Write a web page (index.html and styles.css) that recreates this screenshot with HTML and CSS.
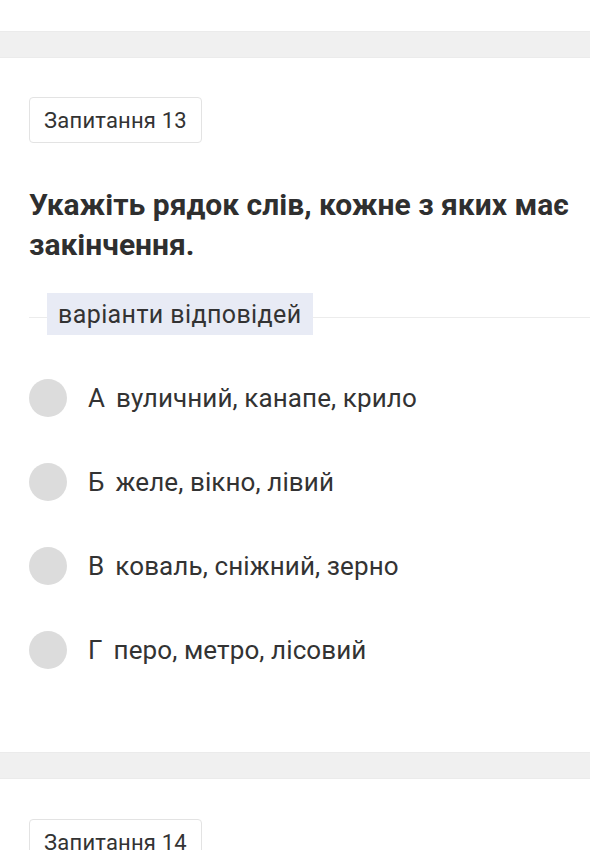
FILE: index.html
```html
<!DOCTYPE html>
<html lang="uk">
<head>
<meta charset="utf-8">
<link rel="stylesheet" href="styles.css">
</head>
<body>
<div class="prev-end"></div>
<div class="band"></div>
<section class="card">
  <div class="badge">Запитання 13</div>
  <h2 class="title">Укажіть рядок слів, кожне з яких має закінчення.</h2>
  <div class="divider"><span class="divider-label">варіанти відповідей</span></div>
  <ul class="options">
    <li class="option"><span class="radio"></span><span class="opt-text"><span class="letter">А</span>вуличний, канапе, крило</span></li>
    <li class="option"><span class="radio"></span><span class="opt-text"><span class="letter">Б</span>желе, вікно, лівий</span></li>
    <li class="option"><span class="radio"></span><span class="opt-text"><span class="letter">В</span>коваль, сніжний, зерно</span></li>
    <li class="option"><span class="radio"></span><span class="opt-text"><span class="letter">Г</span>перо, метро, лісовий</span></li>
  </ul>
</section>
<div class="band"></div>
<section class="card next">
  <div class="badge">Запитання 14</div>
</section>
</body>
</html>
```

FILE: styles.css
```css
html, body {
  margin: 0;
  padding: 0;
  background: #fff;
  font-family: Roboto, "Noto Sans", sans-serif;
  color: #333;
}
.prev-end {
  height: 31px;
}
.band {
  height: 27px;
  background: #f0f0f0;
  border-top: 1px solid #ebebeb;
  border-bottom: 1px solid #ebebeb;
  box-sizing: border-box;
}
.card {
  padding: 39px 0 83px 29px;
  display: flex;
  flex-direction: column;
  align-items: flex-start;
}
.card.next {
  padding-top: 40px;
  padding-bottom: 0;
}
.badge {
  box-sizing: border-box;
  height: 46px;
  width: 173px;
  display: flex;
  align-items: center;
  justify-content: center;
  border: 1px solid #e3e3e3;
  border-radius: 4px;
  font-size: 22px;
  letter-spacing: 0.2px;
  color: #333;
}
.title {
  margin: 42px 0 0 0;
  font-size: 30px;
  line-height: 40px;
  font-weight: 700;
  color: #2f2f2f;
  padding-right: 10px;
}
.divider {
  align-self: stretch;
  margin-top: 28px;
  display: flex;
  align-items: center;
  position: relative;
}
.divider::before {
  content: "";
  position: absolute;
  left: 0;
  right: 0;
  top: 24px;
  border-top: 1px solid #ececec;
}
.divider-label {
  position: relative;
  margin-left: 18px;
  background: #e8ebf5;
  height: 42px;
  padding: 0 11px;
  display: flex;
  align-items: center;
  font-size: 25px;
  letter-spacing: 0.4px;
  color: #333;
}
.options {
  list-style: none;
  margin: 44px 0 0 0;
  padding: 0;
  display: flex;
  flex-direction: column;
  gap: 46px;
}
.option {
  display: flex;
  align-items: center;
  height: 38px;
}
.radio {
  width: 38px;
  height: 38px;
  border-radius: 50%;
  background: #dcdcdc;
  flex: none;
}
.opt-text {
  margin-left: 21px;
  font-size: 26px;
  letter-spacing: 0.1px;
  color: #333;
}
.letter {
  margin-right: 11px;
}
```
